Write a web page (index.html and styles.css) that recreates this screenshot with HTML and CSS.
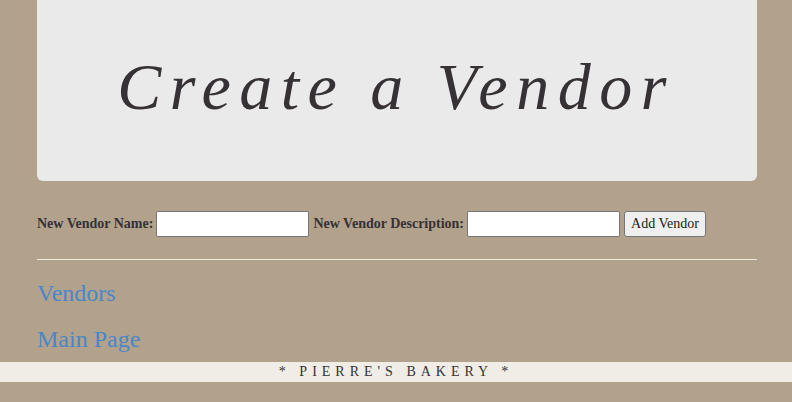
FILE: index.html
```html
<!DOCTYPE html>
<html>
<head>
<meta charset="utf-8">
<title>Create a Vendor</title>
<link rel="stylesheet" href="styles.css">
</head>
<body>
<div class="container">
  <div class="jumbotron">
    <h1 class="title">Create a Vendor</h1>
  </div>
  <form class="vendor-form">
    <label class="label">New Vendor Name:</label>
    <input class="field" type="text">
    <label class="label">New Vendor Description:</label>
    <input class="field" type="text">
    <button class="btn" type="button">Add Vendor</button>
  </form>
  <hr class="rule">
  <p class="nav"><a class="link" href="#">Vendors</a></p>
  <p class="nav"><a class="link" href="#">Main Page</a></p>
</div>
<footer class="footer">* PIERRE'S BAKERY *</footer>
</body>
</html>
```
FILE: styles.css
```css
html, body {
  margin: 0;
  padding: 0;
  background: #b2a28c;
  font-family: "Liberation Serif", "Times New Roman", serif;
  color: #363135;
}
body {
  padding-left: 2px;
}
.container {
  width: 720px;
  margin: 0 auto;
}
.jumbotron {
  height: 181px;
  background: #eaeaea;
  border-radius: 0 0 6px 6px;
  display: flex;
  align-items: center;
  justify-content: center;
}
.title {
  margin: 0 0 7px -2px;
  font-size: 66px;
  font-weight: normal;
  font-style: italic;
  letter-spacing: 8.5px;
  color: #363135;
  line-height: 1;
}
.vendor-form {
  display: flex;
  align-items: center;
  margin-top: 30px;
  height: 26px;
}
.label {
  font-size: 14px;
  font-weight: bold;
  margin-right: 3px;
}
.field {
  width: 149px;
  height: 24px;
  margin: 0 4px 0 0;
  padding: 0 1px;
  border: 1px solid #767676;
  border-radius: 2px;
  background: #fff;
  font-family: inherit;
  box-sizing: content-box;
}
.btn {
  height: 26px;
  padding: 0 6px;
  margin: 0;
  font-family: "Liberation Serif", serif;
  font-size: 14px;
  color: #222;
  background: #efefef;
  border: 1px solid #767676;
  border-radius: 3px;
}
.rule {
  margin: 22px 0 0 0;
  border: 0;
  border-top: 1px solid #eee8df;
}
.nav {
  margin: 0;
  font-size: 24px;
  line-height: 46px;
}
.nav:first-of-type {
  margin-top: 10px;
}
.link {
  color: #4a86c8;
  text-decoration: none;
}
.footer {
  margin-left: -2px;
  margin-top: 0;
  height: 20px;
  background: #f0ece6;
  text-align: center;
  font-size: 14px;
  letter-spacing: 5px;
  line-height: 20px;
  color: #363135;
}
```
